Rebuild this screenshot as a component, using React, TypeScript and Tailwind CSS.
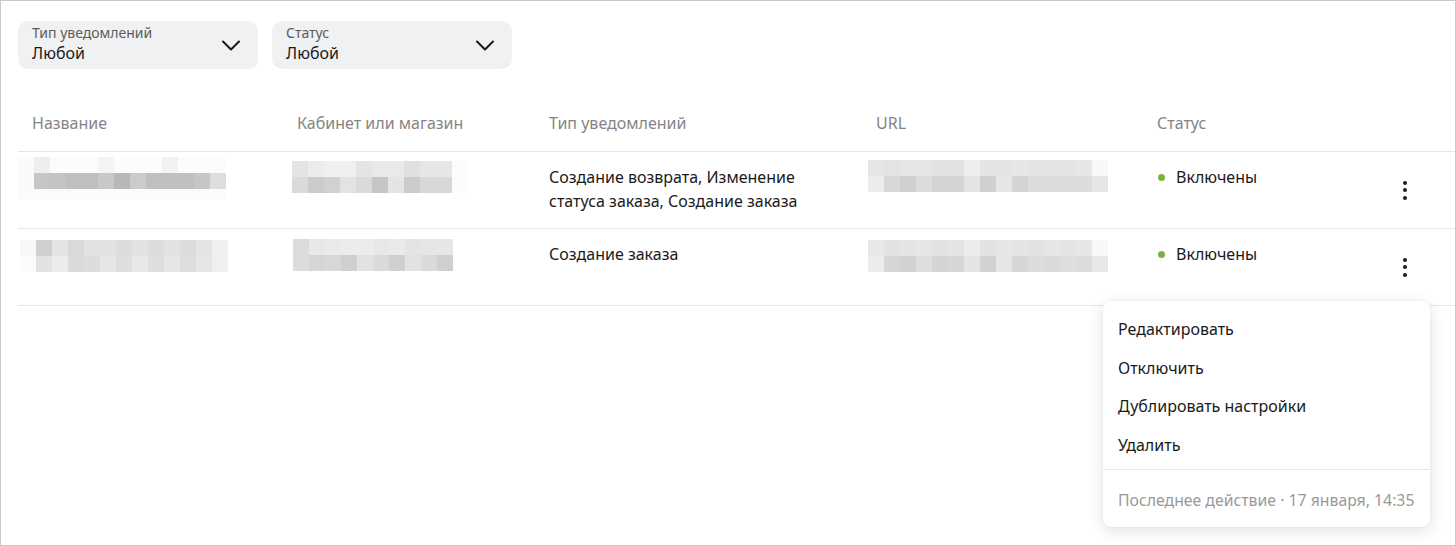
import React from 'react';

type BlurProps = { rows: string[][]; heights?: number[]; ml: number; mt: number };

// pixelated placeholder for the censored cells
const Blur: React.FC<BlurProps> = ({ rows, heights, ml, mt }) => (
  <div className="flex flex-col" style={{ marginLeft: ml, marginTop: mt }}>
    {rows.map((row, i) => (
      <div key={i} className="flex">
        {row.map((c, j) => (
          <div key={j} className="w-[16px] shrink-0" style={{ background: c, height: heights ? heights[i] : 16 }} />
        ))}
      </div>
    ))}
  </div>
);

const Chevron = () => (
  <svg width="20" height="20" viewBox="0 0 20 20" fill="none">
    <path d="M2 6.5L10 14.5L18 6.5" stroke="#1a1a1a" strokeWidth="2" strokeLinecap="round" strokeLinejoin="round" />
  </svg>
);

const Kebab = () => (
  <button className="w-[40px] h-[40px] flex flex-col items-center justify-center gap-[3.5px]">
    <span className="w-[4px] h-[4px] rounded-full bg-[#1a1a1a]" />
    <span className="w-[4px] h-[4px] rounded-full bg-[#1a1a1a]" />
    <span className="w-[4px] h-[4px] rounded-full bg-[#1a1a1a]" />
  </button>
);

const Filter: React.FC<{ label: string; value: string }> = ({ label, value }) => (
  <div className="w-[240px] h-[48px] rounded-[10px] bg-[#f0f1f3] pl-[14px] pr-[17px] flex items-center justify-between">
    <div className="flex flex-col self-stretch pt-[4px]">
      <span className="text-[14px] leading-[16px] text-[#5c5c5c]">{label}</span>
      <span className="mt-[2px] text-[16px] leading-[20px] text-[#1a1a1a]">{value}</span>
    </div>
    <Chevron />
  </div>
);

const cols = 'grid grid-cols-[265px_252px_327px_281px_1fr_100px]';

const name1 = [
  ['#fafafa', '#eeeeee', '#fcfcfc', '#fcfcfc', '#fcfcfc', '#f4f4f4', '#fcfcfc', '#fcfcfc', '#fcfcfc', '#f2f2f2', '#fcfcfc', '#fcfcfc', '#fbfbfb'],
  ['#fafafa', '#c6c6c6', '#c4c4c4', '#bfbfbf', '#bfbfbf', '#c8c8c8', '#b8b8b8', '#cbcbcb', '#c0c0c0', '#c0c0c0', '#c0c0c0', '#c6c6c6', '#dedede'],
  ['#fbfbfb', '#fbfbfb', '#fbfbfb', '#fbfbfb', '#fbfbfb', '#fbfbfb', '#fbfbfb', '#fbfbfb', '#fbfbfb', '#fbfbfb', '#fbfbfb', '#fbfbfb', '#fbfbfb'],
];
const cab1 = [
  ['#e4e4e4', '#ececec', '#f0f0f0', '#f0f0f0', '#e4e4e4', '#e9e9e9', '#e9e9e9', '#e0e0e0', '#e6e6e6', '#e6e6e6', '#fcfcfc'],
  ['#dadada', '#cbcbcb', '#d1d1d1', '#e3e3e3', '#dadada', '#c6c6c6', '#e4e4e4', '#cbcbcb', '#d8d8d8', '#d8d8d8', '#fcfcfc'],
];
const url1 = [
  ['#e6e6e6', '#e3e3e3', '#e6e6e6', '#e6e6e6', '#e2e2e2', '#e2e2e2', '#eeeeee', '#e4e4e4', '#e4e4e4', '#e6e6e6', '#e4e4e4', '#e4e4e4', '#e4e4e4', '#e6e6e6', '#f8f8f8'],
  ['#ececec', '#d8d8d8', '#d0d0d0', '#dcdcdc', '#d4d4d4', '#d4d4d4', '#e4e4e4', '#d0d0d0', '#e6e6e6', '#d4d4d4', '#dcdcdc', '#dcdcdc', '#dcdcdc', '#dcdcdc', '#e6e6e6'],
];
const name2 = [
  ['#f7f7f7', '#d0d0d0', '#e4e4e4', '#d9d9d9', '#e2e2e2', '#e2e2e2', '#dcdcdc', '#e2e2e2', '#dcdcdc', '#e2e2e2', '#dcdcdc', '#e4e4e4', '#efefef'],
  ['#fbfbfb', '#e2e2e2', '#ececec', '#dadada', '#dcdcdc', '#e6e6e6', '#dedede', '#e8e8e8', '#dedede', '#e6e6e6', '#dedede', '#e6e6e6', '#efefef'],
];
const cab2 = [
  ['#dcdcdc', '#e8e8e8', '#eaeaea', '#ececec', '#ececec', '#e8e8e8', '#eaeaea', '#e4e4e4', '#e6e6e6', '#e6e6e6'],
  ['#dcdcdc', '#d6d6d6', '#d8d8d8', '#cfcfcf', '#e2e2e2', '#dadada', '#cfcfcf', '#e2e2e2', '#dadada', '#cfcfcf'],
];
const url2 = [
  ['#e8e8e8', '#e2e2e2', '#e4e4e4', '#e6e6e6', '#e2e2e2', '#e4e4e4', '#ececec', '#e2e2e2', '#e6e6e6', '#e4e4e4', '#e2e2e2', '#e6e6e6', '#e4e4e4', '#e6e6e6', '#f8f8f8'],
  ['#ececec', '#d6d6d6', '#d2d2d2', '#dedede', '#d4d4d4', '#d6d6d6', '#e4e4e4', '#d2d2d2', '#e6e6e6', '#d6d6d6', '#dcdcdc', '#dadada', '#dedede', '#dcdcdc', '#e8e8e8'],
];

const Status = () => (
  <div className="pl-[15px] pt-[13px] flex items-start">
    <span className="flex items-center h-[24px]">
      <span className="w-[7px] h-[7px] rounded-full bg-[#7bb241] mr-[11px]" />
      <span>Включены</span>
    </span>
  </div>
);

export default function App() {
  return (
    <div
      className="relative w-[1456px] h-[546px] overflow-hidden border border-[#c9c9c9] bg-white text-[16px] leading-[24px] text-[#1a1a1a]"
      style={{ fontFamily: '"Noto Sans", "Liberation Sans", Arial, sans-serif' }}
    >
      <div className="flex gap-[14px] pl-[17px] pt-[20px]">
        <Filter label="Тип уведомлений" value="Любой" />
        <Filter label="Статус" value="Любой" />
      </div>

      <div className="ml-[17px] mt-[26px]">
        <div className={`${cols} h-[57px] items-center border-b border-[#e6e6e6] text-[#858585]`}>
          <div className="pl-[14px]">Название</div>
          <div className="pl-[14px]">Кабинет или магазин</div>
          <div className="pl-[14px]">Тип уведомлений</div>
          <div className="pl-[14px]">URL</div>
          <div className="pl-[14px]">Статус</div>
          <div />
        </div>

        <div className={`${cols} h-[77px] border-b border-[#e6e6e6]`}>
          <Blur rows={name1} heights={[16, 16, 11]} ml={0} mt={5} />
          <Blur rows={cab1} ml={9} mt={9} />
          <div className="pl-[14px] pt-[13px]">
            Создание возврата, Изменение
            <br />
            статуса заказа, Создание заказа
          </div>
          <Blur rows={url1} ml={6} mt={8} />
          <Status />
          <div className="flex items-center justify-center">
            <Kebab />
          </div>
        </div>

        <div className={`${cols} h-[77px] border-b border-[#e6e6e6]`}>
          <Blur rows={name2} ml={2} mt={11} />
          <Blur rows={cab2} ml={10} mt={10} />
          <div className="pl-[14px] pt-[13px]">Создание заказа</div>
          <Blur rows={url2} ml={6} mt={11} />
          <Status />
          <div className="flex items-center justify-center">
            <Kebab />
          </div>
        </div>
      </div>

      <div className="absolute top-[300px] right-[25px] w-[327px] rounded-[8px] bg-white shadow-[0_4px_16px_rgba(0,0,0,0.12),0_0_2px_rgba(0,0,0,0.08)]">
        <div className="pt-[9px] pb-[5px]">
          {['Редактировать', 'Отключить', 'Дублировать настройки', 'Удалить'].map((t) => (
            <div key={t} className="h-[38.5px] flex items-center px-[15px]">
              {t}
            </div>
          ))}
        </div>
        <div className="border-t border-[#e6e6e6] h-[58px] flex items-center px-[15px] pt-[2px] text-[15.8px] text-[#999999]">
          Последнее действие · 17 января, 14:35
        </div>
      </div>
    </div>
  );
}
